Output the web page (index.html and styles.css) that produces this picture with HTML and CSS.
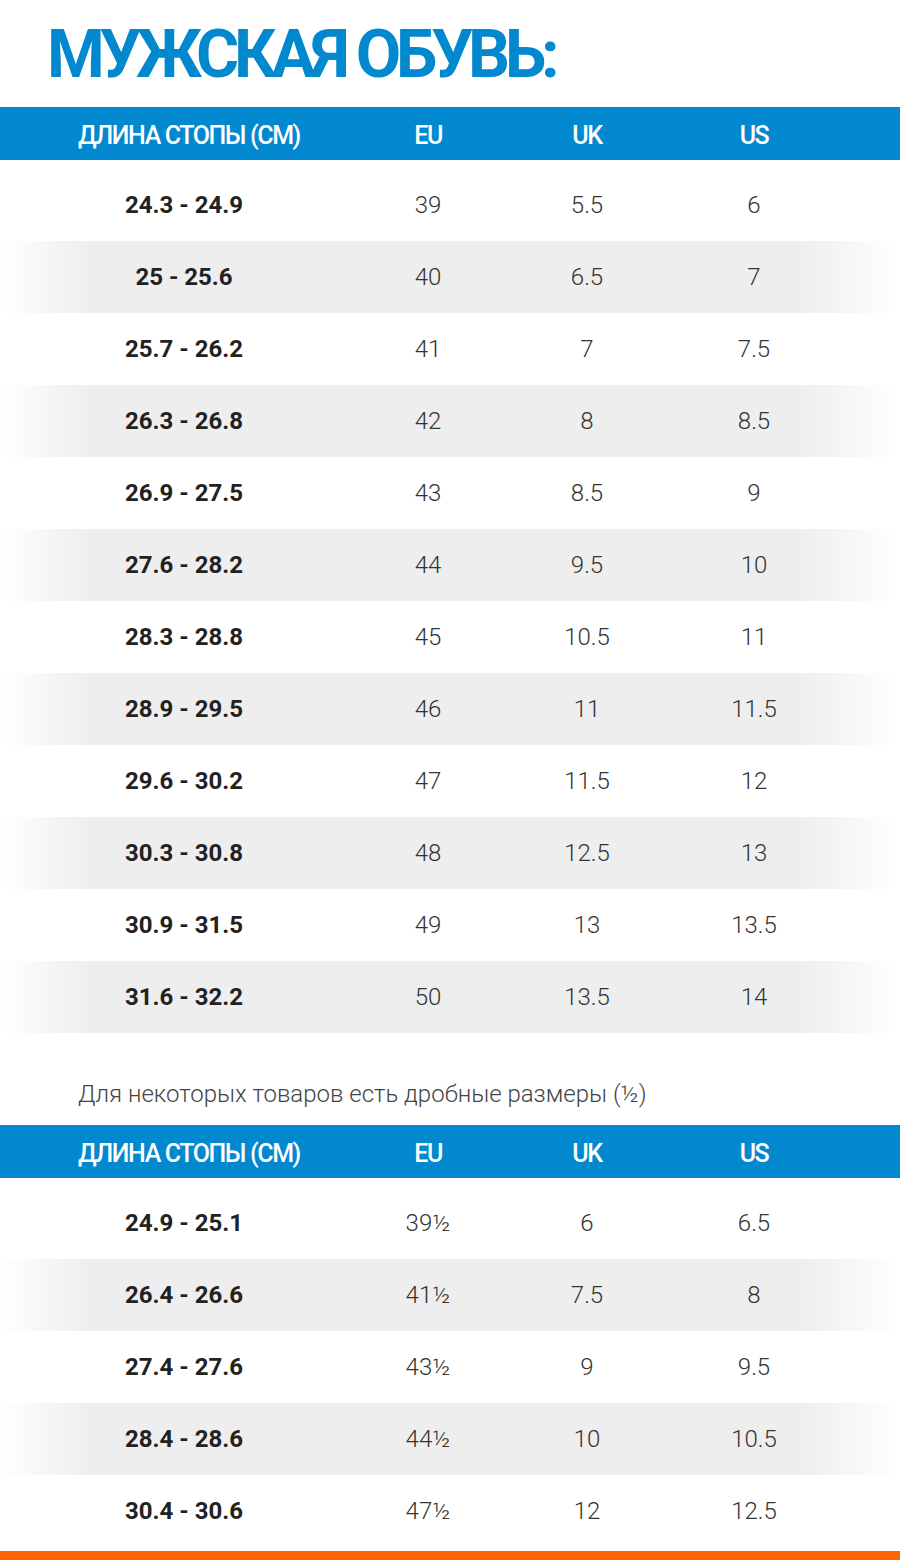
FILE: index.html
```html
<!DOCTYPE html>
<html lang="ru">
<head>
<meta charset="utf-8">
<title>Мужская обувь</title>
<link rel="stylesheet" href="styles.css">
</head>
<body>
<div class="page">
  <h1 class="title">МУЖСКАЯ ОБУВЬ:</h1>

  <div class="table table-main">
    <div class="row head"><div>ДЛИНА СТОПЫ (СМ)</div><div>EU</div><div>UK</div><div>US</div></div>
    <div class="body">
      <div class="row"><div class="len">24.3 - 24.9</div><div>39</div><div>5.5</div><div>6</div></div>
      <div class="row alt"><div class="len">25 - 25.6</div><div>40</div><div>6.5</div><div>7</div></div>
      <div class="row"><div class="len">25.7 - 26.2</div><div>41</div><div>7</div><div>7.5</div></div>
      <div class="row alt"><div class="len">26.3 - 26.8</div><div>42</div><div>8</div><div>8.5</div></div>
      <div class="row"><div class="len">26.9 - 27.5</div><div>43</div><div>8.5</div><div>9</div></div>
      <div class="row alt"><div class="len">27.6 - 28.2</div><div>44</div><div>9.5</div><div>10</div></div>
      <div class="row"><div class="len">28.3 - 28.8</div><div>45</div><div>10.5</div><div>11</div></div>
      <div class="row alt"><div class="len">28.9 - 29.5</div><div>46</div><div>11</div><div>11.5</div></div>
      <div class="row"><div class="len">29.6 - 30.2</div><div>47</div><div>11.5</div><div>12</div></div>
      <div class="row alt"><div class="len">30.3 - 30.8</div><div>48</div><div>12.5</div><div>13</div></div>
      <div class="row"><div class="len">30.9 - 31.5</div><div>49</div><div>13</div><div>13.5</div></div>
      <div class="row alt"><div class="len">31.6 - 32.2</div><div>50</div><div>13.5</div><div>14</div></div>
    </div>
  </div>

  <p class="note">Для некоторых товаров есть дробные размеры (½)</p>

  <div class="table table-half">
    <div class="row head"><div>ДЛИНА СТОПЫ (СМ)</div><div>EU</div><div>UK</div><div>US</div></div>
    <div class="body">
      <div class="row"><div class="len">24.9 - 25.1</div><div>39½</div><div>6</div><div>6.5</div></div>
      <div class="row alt"><div class="len">26.4 - 26.6</div><div>41½</div><div>7.5</div><div>8</div></div>
      <div class="row"><div class="len">27.4 - 27.6</div><div>43½</div><div>9</div><div>9.5</div></div>
      <div class="row alt"><div class="len">28.4 - 28.6</div><div>44½</div><div>10</div><div>10.5</div></div>
      <div class="row"><div class="len">30.4 - 30.6</div><div>47½</div><div>12</div><div>12.5</div></div>
    </div>
  </div>

  <div class="footer-bar"></div>
</div>
</body>
</html>
```

FILE: styles.css
```css
* { box-sizing: border-box; }

html, body {
  margin: 0;
  padding: 0;
  background: #ffffff;
}

body {
  font-family: Roboto, "Noto Sans", "Liberation Sans", sans-serif;
  color: #333333;
}

.page {
  width: 900px;
  height: 1560px;
  display: flex;
  flex-direction: column;
}

.title {
  margin: 0;
  height: 107px;
  padding: 17px 0 0 47px;
  font-family: Roboto, "Liberation Sans", sans-serif;
  font-weight: 700;
  font-size: 66px;
  line-height: 76px;
  letter-spacing: -5.2px;
  color: #0288cf;
}

.row {
  display: grid;
  grid-template-columns: 368px 120px 198px 136px 1fr;
  align-items: center;
  text-align: center;
}

.row > div:nth-child(1) { grid-column: 1; }
.row > div:nth-child(2) { grid-column: 2; }
.row > div:nth-child(3) { grid-column: 3; }
.row > div:nth-child(4) { grid-column: 4; }

.head {
  height: 53px;
  padding-top: 4px;
  background: #0288cf;
  color: #ffffff;
  font-weight: 500;
  font-size: 25px;
  letter-spacing: -1.4px;
}

.head > div:first-child {
  padding-left: 10px;
}

.body {
  padding-top: 9px;
  display: flex;
  flex-direction: column;
}

.body .row {
  height: 72px;
  font-size: 24px;
  font-weight: 300;
  color: #333333;
}

.body .row.alt {
  background: linear-gradient(to right, #ffffff 0px, #eeeeee 90px, #eeeeee 800px, #ffffff 900px);
}

.body .len {
  font-weight: 700;
  color: #222222;
}

.note {
  margin: 0;
  height: 92px;
  padding: 46px 0 0 78px;
  font-size: 24px;
  font-weight: 300;
  line-height: 30px;
  color: #444444;
}

.footer-bar {
  margin-top: auto;
  height: 9px;
  background: #ff6600;
}
```
